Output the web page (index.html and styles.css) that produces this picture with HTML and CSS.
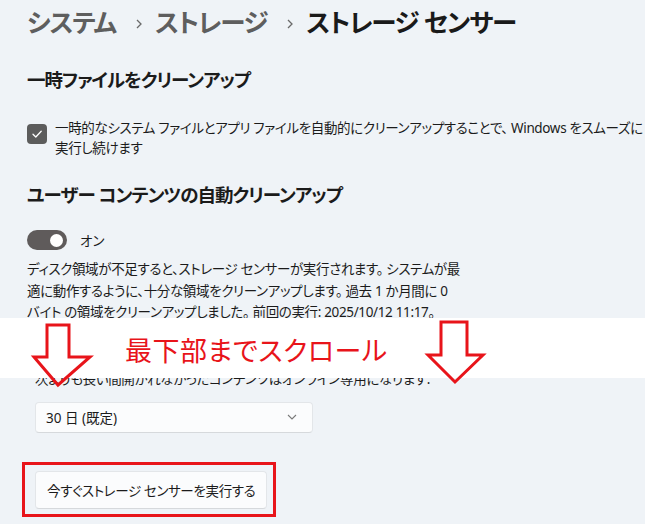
FILE: index.html
```html
<!DOCTYPE html>
<html lang="ja">
<head>
<meta charset="utf-8">
<title>ストレージ センサー</title>
<link rel="stylesheet" href="styles.css">
</head>
<body>
<div class="page">
  <nav class="crumbs">
    <span class="crumb">システム</span>
    <svg class="sep" viewBox="0 0 10 12" width="10" height="12"><path d="M3 2 L7 6 L3 10" fill="none" stroke="#6a6a6a" stroke-width="1.3"/></svg>
    <span class="crumb">ストレージ</span>
    <svg class="sep" viewBox="0 0 10 12" width="10" height="12"><path d="M3 2 L7 6 L3 10" fill="none" stroke="#6a6a6a" stroke-width="1.3"/></svg>
    <span class="crumb current">ストレージ センサー</span>
  </nav>

  <h2 class="title first">一時ファイルをクリーンアップ</h2>
  <div class="check-row">
    <span class="checkbox"><svg viewBox="0 0 20 20" width="20" height="20"><path d="M6 10.2 L8.8 13 L14.2 7.2" fill="none" stroke="#fff" stroke-width="1.3" stroke-linecap="round" stroke-linejoin="round"/></svg></span>
    <p class="check-text">一時的なシステム ファイルとアプリ ファイルを自動的にクリーンアップすることで、 Windows をスムーズに<br>実行し続けます</p>
  </div>

  <h2 class="title second">ユーザー コンテンツの自動クリーンアップ</h2>
  <div class="toggle-row">
    <span class="toggle"><span class="knob"></span></span>
    <span class="toggle-label">オン</span>
  </div>
  <p class="desc">ディスク領域が不足すると、ストレージ センサーが実行されます。 システムが最<br>適に動作するように、十分な領域をクリーンアップします。 過去 1 か月間に 0<br>バイト の領域をクリーンアップしました。 前回の実行: 2025/10/12 11:17。</p>

  <div class="sub">
    <p class="hidden-line">次よりも長い間開かれなかったコンテンツはオンライン専用になります:</p>
    <div class="select"><span>30 日 (既定)</span><svg viewBox="0 0 12 8" width="12" height="8"><path d="M2 2 L6 6 L10 2" fill="none" stroke="#7a7a7a" stroke-width="1.1"/></svg></div>
  </div>

  <div class="highlight">
    <button class="btn">今すぐストレージ センサーを実行する</button>
  </div>
</div>

<div class="band">
  <svg class="arrow arrow-left" viewBox="0 0 62 64" width="62" height="64"><path d="M15 2 H37 V34 H58 L26 62 L2 34 H15 Z" fill="none" stroke="#e8141a" stroke-width="3" stroke-linejoin="miter"/></svg>
  <span class="band-text">最下部までスクロール</span>
  <svg class="arrow arrow-right" viewBox="0 0 60 64" width="60" height="64"><path d="M15 2 H41 V35 H57 L29 62 L2 35 H15 Z" fill="none" stroke="#e8141a" stroke-width="3" stroke-linejoin="miter"/></svg>
</div>
</body>
</html>
```
FILE: styles.css
```css
* { box-sizing: border-box; }
html, body { margin: 0; padding: 0; }
body {
  background: #eff3f7;
  color: #1b1b1b;
  font-family: "Noto Sans", "Noto Sans CJK JP", sans-serif;
  font-feature-settings: "palt";
  width: 645px;
  height: 524px;
  overflow: hidden;
  position: relative;
}
p { margin: 0; }
.page { padding: 0 0 0 27px; }

.crumbs {
  height: 44px;
  display: flex;
  align-items: center;
  font-size: 25.5px;
  line-height: 36px;
}
.crumb { color: #5e5e5e; font-weight: 700; letter-spacing: -1.2px; }
.crumb.current { color: #1a1a1a; }
.sep { margin: 4px 11px 0 18px; flex: none; }

.title {
  margin: 0;
  font-size: 18.5px;
  line-height: 28px;
  font-weight: 700;
  letter-spacing: -1px;
}
.title.first { margin-top: 22px; }
.title.second { margin-top: 23px; }

.check-row {
  display: flex;
  align-items: flex-start;
  margin-top: 24px;
}
.checkbox {
  width: 20px; height: 20px;
  border-radius: 4px;
  background: #5c5c5c;
  margin-top: 6px;
  flex: none;
}
.checkbox svg { display: block; }
.check-text {
  margin-left: 8px;
  font-size: 13.5px;
  line-height: 20px;
  letter-spacing: -0.35px;
  white-space: nowrap;
}

.toggle-row {
  display: flex;
  align-items: center;
  margin-top: 21px;
  height: 20px;
}
.toggle {
  width: 40px; height: 20px;
  border-radius: 10px;
  background: #5f5b5b;
  display: flex;
  align-items: center;
  justify-content: flex-end;
  padding-right: 4px;
}
.knob { width: 13px; height: 13px; border-radius: 50%; background: #fff; }
.toggle-label { margin-left: 13px; font-size: 13.5px; }

.desc {
  margin-top: 9px;
  font-size: 13.5px;
  line-height: 21.5px;
  letter-spacing: -0.35px;
  white-space: nowrap;
}

.sub { padding-left: 8px; }
.hidden-line {
  margin-top: 45px;
  font-size: 13.5px;
  line-height: 20px;
  letter-spacing: -0.35px;
}
.select {
  margin-top: 13px;
  width: 278px;
  height: 31px;
  background: #fbfcfd;
  border: 1px solid #e3e6e9;
  border-bottom-color: #d6d9dc;
  border-radius: 4px;
  display: flex;
  align-items: center;
  justify-content: space-between;
  padding: 0 14px 0 10px;
  font-size: 13.5px;
}

.highlight {
  display: inline-block;
  margin-top: 29px;
  margin-left: -5px;
  border: 3px solid #e8141a;
  padding: 6px 6px 5px 10px;
}
.btn {
  display: block;
  height: 38px;
  padding: 0 11px;
  background: #fbfcfd;
  border: 1px solid #e3e6e9;
  border-bottom-color: #d6d9dc;
  border-radius: 4px;
  font-family: inherit;
  font-feature-settings: "palt";
  font-size: 13.5px;
  letter-spacing: -0.35px;
  color: #1b1b1b;
}

.band {
  position: absolute;
  left: 0; top: 318px;
  width: 645px; height: 60px;
  background: #fff;
  display: flex;
  align-items: center;
  padding-left: 125px;
}
.band-text {
  color: #e8141a;
  font-size: 27px;
  line-height: 32px;
  margin-top: 6px;
  letter-spacing: 0.5px;
}
.arrow { position: absolute; overflow: visible; }
.arrow-left { left: 32px; top: 5px; }
.arrow-right { left: 426px; top: 2px; }
```
